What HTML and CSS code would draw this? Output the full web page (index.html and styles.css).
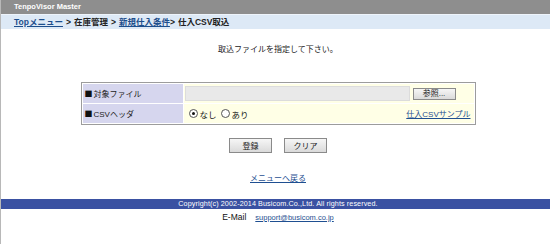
FILE: index.html
```html
<!DOCTYPE html>
<html lang="ja">
<head>
  <meta charset="UTF-8">
  <title>仕入CSV取込</title>
  <link rel="stylesheet" href="styles.css">
</head>
<body>
  <div class="app-header">TenpoVisor Master</div>
  <div class="crumbs">
    <a href="#">Topメニュー</a><span class="sep">&gt;</span>在庫管理<span class="sep">&gt;</span><a href="#">新規仕入条件</a><span class="sep sep-tight">&gt;</span>仕入CSV取込
  </div>

  <div class="main">
    <p class="lead">取込ファイルを指定して下さい。</p>

    <table class="form-table">
      <tr class="row-file">
        <th><span class="mark">■</span>対象ファイル</th>
        <td>
          <div class="file-line">
            <span class="file-field"></span>
            <button class="btn btn-browse" type="button">参照...</button>
          </div>
        </td>
      </tr>
      <tr class="row-header">
        <th><span class="mark">■</span>CSVヘッダ</th>
        <td>
          <div class="radio-line">
            <label class="radio"><span class="radio-dot is-checked"></span>なし</label>
            <label class="radio"><span class="radio-dot"></span>あり</label>
            <a class="sample-link" href="#">仕入CSVサンプル</a>
          </div>
        </td>
      </tr>
    </table>

    <div class="actions">
      <button class="btn btn-action" type="button">登録</button>
      <button class="btn btn-action" type="button">クリア</button>
    </div>

    <a class="back-link" href="#">メニューへ戻る</a>
  </div>

  <div class="footer-bar">Copyright(c) 2002-2014 Busicom.Co.,Ltd. All rights reserved.</div>
  <div class="footer-mail">
    <span class="mail-label">E-Mail</span><a href="#">support@busicom.co.jp</a>
  </div>
</body>
</html>
```

FILE: styles.css
```css
* {
  margin: 0;
  padding: 0;
  box-sizing: border-box;
}

body {
  background-color: #fff;
  color: #222;
  font-family: "Liberation Sans", "Noto Sans CJK JP", sans-serif;
  font-size: 8px;
  width: 550px;
  height: 244px;
  overflow: hidden;
  border-left: 1px solid #b8b8b8;
}

a {
  color: #1f4f91;
}

.app-header {
  height: 14px;
  line-height: 14px;
  padding-left: 13px;
  background-color: #8e8e8e;
  color: #fff;
  font-weight: bold;
  font-size: 7.5px;
}

.crumbs {
  height: 15px;
  line-height: 15px;
  padding-left: 13px;
  background-color: #dde9f6;
  border-top: 1px solid #eef4fb;
  font-size: 8.5px;
  font-weight: bold;
  color: #222;
}

.crumbs a {
  color: #1d4e8c;
}

.sep {
  margin: 0 3px;
}

.sep-tight {
  margin-left: 0;
}

.main {
  display: flex;
  flex-direction: column;
  align-items: center;
  padding-left: 5px;
}

.lead {
  margin-top: 15px;
  height: 12px;
  line-height: 12px;
  font-size: 8px;
}

.form-table {
  margin-top: 26px;
  width: 395px;
  border: 1px solid #9c9c9c;
  border-spacing: 1px;
  background-color: #fff;
}

.form-table th {
  width: 100px;
  padding-left: 2px;
  text-align: left;
  font-weight: normal;
  background-color: #d6d6ee;
  font-size: 8px;
}

.mark {
  font-family: "Noto Sans CJK JP", sans-serif;
  font-size: 8px;
  color: #111;
  margin-right: 1px;
}

.form-table td {
  background-color: #ffffe6;
  padding: 0 3px 0 1px;
}

.row-file th,
.row-file td {
  height: 19px;
}

.row-header th,
.row-header td {
  height: 19px;
}

.file-line {
  display: flex;
  align-items: center;
  gap: 3px;
}

.file-field {
  flex: 1;
  height: 15px;
  background-color: #e9e9e9;
  border: 1px solid #dcdcdc;
}

.btn {
  font-family: "Liberation Sans", "Noto Sans CJK JP", sans-serif;
  font-size: 8px;
  color: #222;
  border: 1px solid #8a8a8a;
  background: linear-gradient(#f6f6f6, #dadada);
  cursor: pointer;
}

.btn-browse {
  width: 43px;
  height: 12px;
  line-height: 10px;
  margin-right: 15px;
}

.radio-line {
  display: flex;
  align-items: center;
  padding-left: 4px;
}

.radio {
  display: flex;
  align-items: center;
  margin-right: 4px;
  font-size: 8.5px;
}

.radio-dot {
  width: 9px;
  height: 9px;
  border: 1px solid #555;
  border-radius: 50%;
  background-color: #fff;
  margin-right: 2px;
  display: flex;
  align-items: center;
  justify-content: center;
}

.radio-dot.is-checked::after {
  content: "";
  width: 3px;
  height: 3px;
  border-radius: 50%;
  background-color: #111;
}

.sample-link {
  margin-left: auto;
  font-size: 8px;
}

.actions {
  display: flex;
  gap: 12px;
  margin-top: 13px;
}

.btn-action {
  width: 43px;
  height: 15px;
}

.back-link {
  margin-top: 21px;
  height: 10px;
  line-height: 10px;
  font-size: 8px;
}

.footer-bar {
  margin-top: 15px;
  height: 10px;
  line-height: 10px;
  background-color: #3a51a2;
  color: #fff;
  text-align: center;
  font-size: 7.2px;
  letter-spacing: 0.1px;
  padding-left: 5px;
}

.footer-mail {
  margin-top: 2px;
  height: 12px;
  line-height: 12px;
  text-align: center;
  font-size: 8.5px;
  padding-left: 5px;
}

.mail-label {
  margin-right: 9px;
  color: #111;
}

.footer-mail a {
  font-size: 7.5px;
}
```
